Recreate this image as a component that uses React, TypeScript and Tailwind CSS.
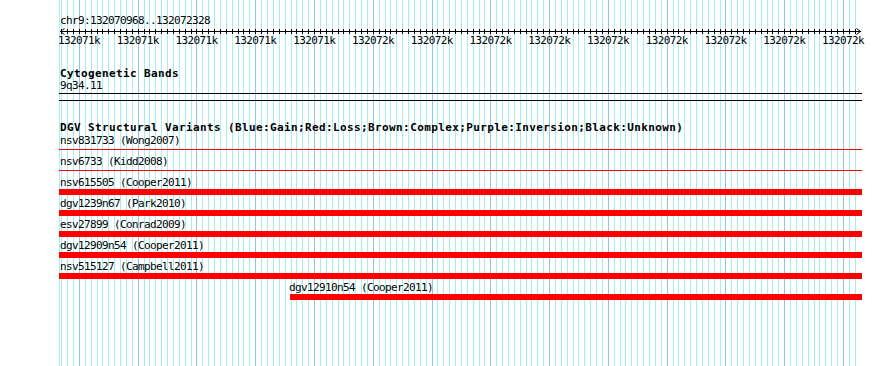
import React from "react";

const START = 132070968;
const END = 132072328;
const PX_PER_10BP = 5.877;
const GRID_X0 = 61.3;

const gridLines: { x: number; major: boolean }[] = [];
for (let k = 0; START + 2 + k * 10 <= END; k++) {
  const bp = 132070970 + k * 10;
  gridLines.push({ x: Math.round(GRID_X0 + k * PX_PER_10BP), major: bp % 100 === 0 });
}

const labels = [
  "132071k",
  "132071k",
  "132071k",
  "132071k",
  "132071k",
  "132072k",
  "132072k",
  "132072k",
  "132072k",
  "132072k",
  "132072k",
  "132072k",
  "132072k",
  "132072k",
];

type Variant = { name: string; thick: boolean; offset: number };
const variants: Variant[] = [
  { name: "nsv831733 (Wong2007)", thick: false, offset: 0 },
  { name: "nsv6733 (Kidd2008)", thick: false, offset: 0 },
  { name: "nsv615505 (Cooper2011)", thick: true, offset: 0 },
  { name: "dgv1239n67 (Park2010)", thick: true, offset: 0 },
  { name: "esv27899 (Conrad2009)", thick: true, offset: 0 },
  { name: "dgv12909n54 (Cooper2011)", thick: true, offset: 0 },
  { name: "nsv515127 (Campbell2011)", thick: true, offset: 0 },
  { name: "dgv12910n54 (Cooper2011)", thick: true, offset: 231 },
];

function Grid() {
  return (
    <svg className="absolute left-0 top-0" width={890} height={366}>
      <rect x={59} y={0} width={1} height={366} fill="#a8eeee" />
      {gridLines.map((g, i) => (
        <rect key={i} x={g.x} y={0} width={1} height={366} fill={g.major ? "#8cc6ea" : "#a8eeee"} />
      ))}
    </svg>
  );
}

function Ruler() {
  return (
    <svg width={803} height={8} className="block">
      <rect x={1} y={4} width={801} height={1} fill="#000" />
      {gridLines.map((g, i) => (
        <rect key={i} x={g.x - 59} y={2} width={1} height={5} fill="#000" />
      ))}
      <path d="M1.5 4.5 L5.5 1.5 M1.5 4.5 L5.5 7.5" stroke="#000" strokeWidth={1} fill="none" />
      <path d="M801.5 4.5 L797.5 1.5 M801.5 4.5 L797.5 7.5" stroke="#000" strokeWidth={1} fill="none" />
    </svg>
  );
}

export default function App() {
  return (
    <div
      className="relative w-[890px] h-[366px] bg-white overflow-hidden text-black"
      style={{ fontFamily: '"DejaVu Sans Mono", monospace' }}
    >
      <Grid />
      <div className="relative ml-[59px] w-[803px] pt-[15px] flex flex-col text-[11px] leading-[12px] tracking-[-0.62px]">
        <div className="h-[12px] pl-[1px]">chr9:132070968..132072328</div>
        <Ruler />
        <div className="flex ml-[-9.3px] h-[12px]">
          {labels.map((l, i) => (
            <div key={i} className="w-[58.77px] shrink-0 text-center">
              {l}
            </div>
          ))}
        </div>
        <div className="mt-[21px] h-[12px] pl-[1px] font-bold tracking-[0.38px]">Cytogenetic Bands</div>
        <div className="h-[12px] pl-[1px]">9q34.11</div>
        <div className="mt-[1px] h-px bg-black" />
        <div className="mt-[6px] h-px bg-black" />
        <div className="mt-[21px] h-[13px] pl-[1px] font-bold tracking-[0.38px] whitespace-nowrap">
          DGV Structural Variants (Blue:Gain;Red:Loss;Brown:Complex;Purple:Inversion;Black:Unknown)
        </div>
        {variants.map((v, i) => (
          <div key={i} className="h-[21px] flex flex-col">
            <div
              className="h-[12px] whitespace-nowrap"
              style={{ paddingLeft: v.offset > 0 ? v.offset - 1 : 1 }}
            >
              {v.name}
            </div>
            <div className="h-[6px]" style={{ paddingLeft: v.offset }}>
              {v.thick ? (
                <div className="h-[6px] bg-[#ff0000]" />
              ) : (
                <div className="mt-[2px] h-px bg-[#ff0000]" />
              )}
            </div>
          </div>
        ))}
      </div>
    </div>
  );
}
